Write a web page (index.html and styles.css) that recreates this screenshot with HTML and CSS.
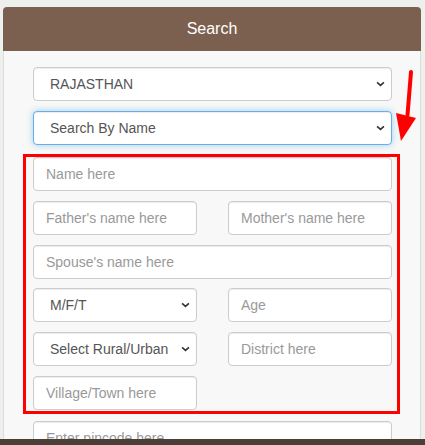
FILE: index.html
```html
<!DOCTYPE html>
<html>
<head>
    <title>Search</title>
    <link rel="stylesheet" href="styles.css">
</head>
<body>

<div class="search-card">
    <div class="card-head">Search</div>
    <form class="card-body">
        <select class="field">
            <option>RAJASTHAN</option>
        </select>
        <select class="field focused">
            <option>Search By Name</option>
        </select>

        <div class="mark-box">
            <input class="field" type="text" placeholder="Name here">
            <div class="pair">
                <input class="field" type="text" placeholder="Father's name here">
                <input class="field" type="text" placeholder="Mother's name here">
            </div>
            <input class="field" type="text" placeholder="Spouse's name here">
            <div class="pair">
                <select class="field">
                    <option>M/F/T</option>
                </select>
                <input class="field" type="text" placeholder="Age">
            </div>
            <div class="pair">
                <select class="field">
                    <option>Select Rural/Urban</option>
                </select>
                <input class="field" type="text" placeholder="District here">
            </div>
            <div class="pair">
                <input class="field" type="text" placeholder="Village/Town here">
            </div>
        </div>

        <input class="field pin" type="text" placeholder="Enter pincode here">
    </form>
</div>

<svg class="mark-arrow" width="30" height="90" viewBox="0 0 30 90">
    <line x1="21" y1="12" x2="17.5" y2="55" stroke="#ff0000" stroke-width="4" stroke-linecap="round"/>
    <polygon points="6,53 26,58 11,81" fill="#ff0000"/>
</svg>

<div class="bottom-bar"></div>

</body>
</html>
```

FILE: styles.css
```css
* {
    box-sizing: border-box;
    margin: 0;
    padding: 0;
}
body {
    font-family: 'Liberation Sans', Arial, sans-serif;
    background-color: #eef0ee;
    position: relative;
    height: 445px;
    overflow: hidden;
}
.search-card {
    margin: 7px 0 0 3px;
    width: 418px;
}
.card-head {
    height: 44px;
    line-height: 44px;
    background-color: #7b6050;
    color: #fff;
    font-size: 16px;
    text-align: center;
    border-radius: 4px 4px 0 0;
}
.card-body {
    background-color: #f7f8f7;
    border: 1px solid #dcdedc;
    border-top: none;
    padding: 16px 28px 20px 29px;
    display: flex;
    flex-direction: column;
    gap: 10px;
}
.field {
    display: block;
    width: 100%;
    height: 34px;
    padding: 6px 12px;
    font-family: inherit;
    font-size: 14px;
    color: #555;
    background-color: #fff;
    border: 1px solid #ccc;
    border-radius: 4px;
    box-shadow: inset 0 1px 1px rgba(0, 0, 0, 0.075);
    outline: none;
}
.field::placeholder {
    color: #999;
}
select.field {
    appearance: none;
    -webkit-appearance: none;
    padding-left: 16px;
    background-image: url("data:image/svg+xml,%3Csvg xmlns='http://www.w3.org/2000/svg' width='10' height='6' viewBox='0 0 10 6'%3E%3Cpath d='M1.2 1.2 L5 4.6 L8.8 1.2' fill='none' stroke='%23333' stroke-width='1.8'/%3E%3C/svg%3E");
    background-repeat: no-repeat;
    background-position: right 6px center;
    background-size: 9px 6px;
}
.field.focused {
    border-color: #66afe9;
    box-shadow: inset 0 1px 1px rgba(0, 0, 0, 0.075), 0 0 6px rgba(102, 175, 233, 0.6);
}
.mark-box {
    margin: -1px -8px 0 -10px;
    border: 3px solid #ff0000;
    padding: 0 5px 1px 7px;
    display: flex;
    flex-direction: column;
    gap: 9.75px;
}
.pair {
    display: grid;
    grid-template-columns: 1fr 1fr;
    column-gap: 31px;
}
.pin {
    margin-top: -3px;
}
.mark-arrow {
    position: absolute;
    left: 390px;
    top: 60px;
}
.bottom-bar {
    position: fixed;
    left: 0;
    right: 0;
    bottom: 0;
    height: 6px;
    background-color: #4b3e36;
}
```
